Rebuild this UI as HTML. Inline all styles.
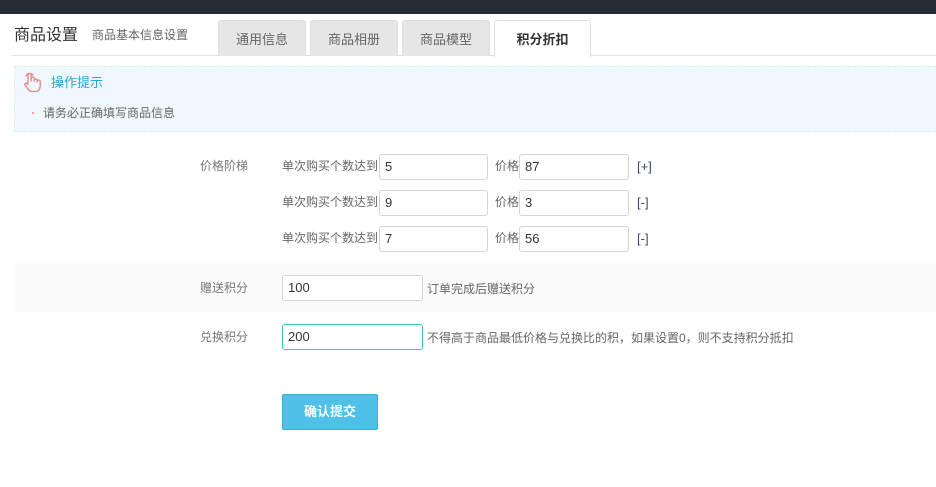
<!DOCTYPE html>
<html><head><meta charset="utf-8"><style>
*{margin:0;padding:0;box-sizing:border-box}
body{width:936px;height:487px;background:#fff;position:relative;overflow:hidden;font-family:"Liberation Sans","Noto Sans CJK SC",sans-serif;color:#555;font-size:12px}
.a{position:absolute;white-space:nowrap}
.tab{position:absolute;top:20px;height:36px;background:#e6e6e6;border:1px solid #e0e0e0;border-bottom:none;border-radius:3px 3px 0 0;text-align:center;line-height:38px;font-size:13px;color:#666}
.tab.on{background:#fff;color:#333;font-weight:bold;height:36px}
.in{position:absolute;height:26px;border:1px solid #d5d5d5;border-radius:3px;background:#fff;font-size:13px;color:#333;padding-left:5px;line-height:24px}
.lbl{position:absolute;color:#777;font-size:12px;white-space:nowrap}
.br{font-size:13px;color:#3a4a6a}
</style></head><body>
<div class="a" style="left:0;top:0;width:936px;height:14px;background:#262d36"></div>
<div class="a" style="left:14px;top:21px;font-size:16px;color:#333">商品设置</div>
<div class="a" style="left:92px;top:26px;font-size:12px;color:#666">商品基本信息设置</div>
<div class="a" style="left:12px;top:55px;width:924px;height:1px;background:#e4e4e4"></div>
<div class="tab" style="left:218px;width:88px">通用信息</div>
<div class="tab" style="left:310px;width:88px">商品相册</div>
<div class="tab" style="left:402px;width:88px">商品模型</div>
<div class="tab on" style="left:494px;width:97px;height:37px">积分折扣</div>
<div class="a" style="left:14px;top:66px;width:922px;height:66px;background:#eef8fd;border:1px dashed #d8f0fa;border-right:none"></div>
<svg class="a" style="left:22px;top:71px" width="22" height="22" viewBox="0 0 22 22"><path d="M6 12V4a1.6 1.6 0 0 1 3.2 0v6M9.2 9V7.5a1.5 1.5 0 0 1 3 0V10M12.2 9.5a1.5 1.5 0 0 1 3 0V11M15.2 10.5a1.5 1.5 0 0 1 3 0V15c0 3-2 5.5-5 5.5H10c-2 0-3-1-4.5-3L3 14c-.8-1 .5-2.5 1.8-1.5L6 13.5M4 5a4 4 0 0 1 7-1" fill="none" stroke="#f08080" stroke-width="1.3" stroke-linecap="round"/></svg>
<div class="a" style="left:51px;top:72px;font-size:13px;color:#2aa4d5">操作提示</div>
<div class="a" style="left:32px;top:112px;width:2px;height:2px;background:#f5a0a0"></div>
<div class="a" style="left:43px;top:104px;font-size:12px;color:#666">请务必正确填写商品信息</div>

<div class="lbl" style="left:200px;top:157px">价格阶梯</div>
<div class="lbl" style="left:282px;top:157px;color:#666">单次购买个数达到</div>
<div class="in" style="left:379px;top:154px;width:109px">5</div>
<div class="lbl" style="left:495px;top:157px;color:#666">价格</div>
<div class="in" style="left:519px;top:154px;width:110px">87</div>
<div class="lbl br" style="left:637px;top:159px">[+]</div>
<div class="lbl" style="left:282px;top:193px;color:#666">单次购买个数达到</div>
<div class="in" style="left:379px;top:190px;width:109px">9</div>
<div class="lbl" style="left:495px;top:193px;color:#666">价格</div>
<div class="in" style="left:519px;top:190px;width:110px">3</div>
<div class="lbl br" style="left:637px;top:195px">[-]</div>
<div class="lbl" style="left:282px;top:229px;color:#666">单次购买个数达到</div>
<div class="in" style="left:379px;top:226px;width:109px">7</div>
<div class="lbl" style="left:495px;top:229px;color:#666">价格</div>
<div class="in" style="left:519px;top:226px;width:110px">56</div>
<div class="lbl br" style="left:637px;top:231px">[-]</div>

<div class="a" style="left:14px;top:263px;width:922px;height:49px;background:#fbfbfb"></div>
<div class="lbl" style="left:200px;top:279px">赠送积分</div>
<div class="in" style="left:282px;top:275px;width:141px">100</div>
<div class="lbl" style="left:427px;top:280px;color:#666">订单完成后赠送积分</div>
<div class="lbl" style="left:200px;top:328px">兑换积分</div>
<div class="in" style="left:282px;top:324px;width:141px;border-color:#3cc3c0">200</div>
<div class="lbl" style="left:427px;top:329px;color:#666">不得高于商品最低价格与兑换比的积，如果设置0，则不支持积分抵扣</div>
<div class="a" style="left:282px;top:394px;width:96px;height:36px;background:#4fc0e8;border:1px solid #3fb0d8;border-radius:2px;color:#fff;font-weight:bold;font-size:13px;text-align:center;line-height:34px">确认提交</div>
</body></html>
